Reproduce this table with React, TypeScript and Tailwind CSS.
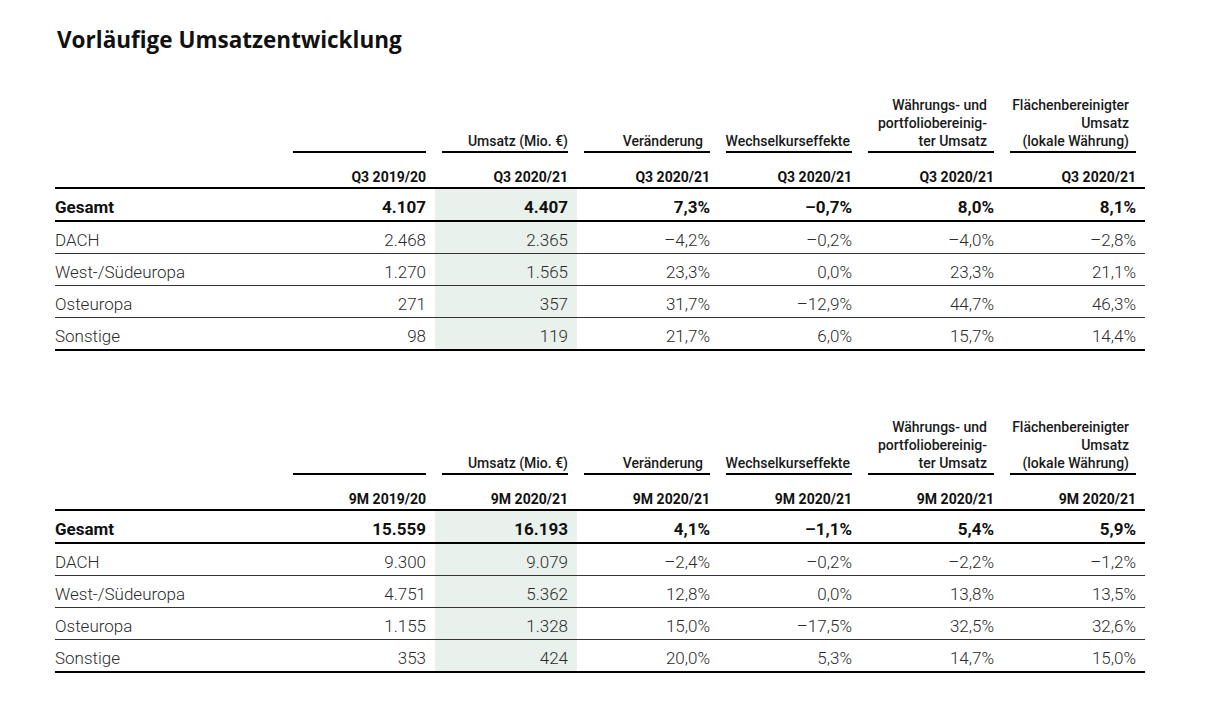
import React from 'react';

type Row = { label: string; values: string[] };

const q3Rows: Row[] = [
  { label: 'Gesamt', values: ['4.107', '4.407', '7,3%', '–0,7%', '8,0%', '8,1%'] },
  { label: 'DACH', values: ['2.468', '2.365', '–4,2%', '–0,2%', '–4,0%', '–2,8%'] },
  { label: 'West-/Südeuropa', values: ['1.270', '1.565', '23,3%', '0,0%', '23,3%', '21,1%'] },
  { label: 'Osteuropa', values: ['271', '357', '31,7%', '–12,9%', '44,7%', '46,3%'] },
  { label: 'Sonstige', values: ['98', '119', '21,7%', '6,0%', '15,7%', '14,4%'] },
];

const nineMonthRows: Row[] = [
  { label: 'Gesamt', values: ['15.559', '16.193', '4,1%', '–1,1%', '5,4%', '5,9%'] },
  { label: 'DACH', values: ['9.300', '9.079', '–2,4%', '–0,2%', '–2,2%', '–1,2%'] },
  { label: 'West-/Südeuropa', values: ['4.751', '5.362', '12,8%', '0,0%', '13,8%', '13,5%'] },
  { label: 'Osteuropa', values: ['1.155', '1.328', '15,0%', '–17,5%', '32,5%', '32,6%'] },
  { label: 'Sonstige', values: ['353', '424', '20,0%', '5,3%', '14,7%', '15,0%'] },
];

const headers: string[][] = [
  [],
  ['Umsatz (Mio. €)'],
  ['Veränderung'],
  ['Wechselkurseffekte'],
  ['Währungs- und', 'portfoliobereinig-', 'ter Umsatz'],
  ['Flächenbereinigter', 'Umsatz', '(lokale Währung)'],
];

// inner right inset of the header label above its underline
const headerInset = ['', '', 'pr-[7px]', 'pr-[2px]', 'pr-[7px]', 'pr-[7px]'];

const cols = 'grid grid-cols-[238px_repeat(6,142px)]';

function SalesTable({ prev, current, rows }: { prev: string; current: string; rows: Row[] }) {
  const periods = [prev, current, current, current, current, current];

  return (
    <div className="w-[1090px]">
      {/* column titles */}
      <div className={`${cols} items-end`}>
        <div />
        {headers.map((lines, i) => (
          <div key={i} className={i === 0 ? 'pr-[9px]' : 'pl-[7px] pr-[9px]'}>
            <div
              className={`flex flex-col items-end border-b-2 border-black pb-[1px] text-[14px] font-medium leading-[18px] text-[#1a1a1a] ${headerInset[i]}`}
            >
              {lines.map(line => (
                <span key={line} className="whitespace-nowrap">{line}</span>
              ))}
            </div>
          </div>
        ))}
      </div>

      {/* periods */}
      <div className={`${cols} h-[36px] items-end border-b-2 border-black`}>
        <div />
        {periods.map((p, i) => (
          <div key={i} className="pr-[9px] text-right text-[14px] font-bold leading-[20px] text-[#111]">{p}</div>
        ))}
      </div>

      {rows.map((row, r) => {
        const bold = r === 0;
        const last = r === rows.length - 1;
        const rowCls = bold || last ? 'h-[33px] border-b-2 border-black' : 'h-[32px] border-b border-[#333]';
        const textCls = bold ? 'font-bold text-[#111]' : 'font-light text-[#2b2b2b]';
        return (
          <div key={row.label} className={`${cols} ${rowCls}`}>
            <div className={`pt-[6px] text-[17px] leading-[25px] ${textCls}`}>{row.label}</div>
            {row.values.map((v, i) => (
              <div
                key={i}
                className={`pr-[9px] pt-[6px] text-right text-[17px] leading-[25px] ${textCls} ${i === 1 ? 'bg-[#e8f1eb]' : ''}`}
              >
                {v}
              </div>
            ))}
          </div>
        );
      })}
    </div>
  );
}

export default function App() {
  return (
    <div className="min-h-[720px] w-[1207px] bg-white pl-[55px] pt-[24px] font-['Roboto','Liberation_Sans',sans-serif]">
      <h1 className="pl-[2px] font-['Open_Sans','Liberation_Sans',sans-serif] text-[22.5px] font-bold leading-[31px] text-[#111]">
        Vorläufige Umsatzentwicklung
      </h1>
      <div className="mt-[41px]">
        <SalesTable prev="Q3 2019/20" current="Q3 2020/21" rows={q3Rows} />
      </div>
      <div className="mt-[67px]">
        <SalesTable prev="9M 2019/20" current="9M 2020/21" rows={nineMonthRows} />
      </div>
    </div>
  );
}
